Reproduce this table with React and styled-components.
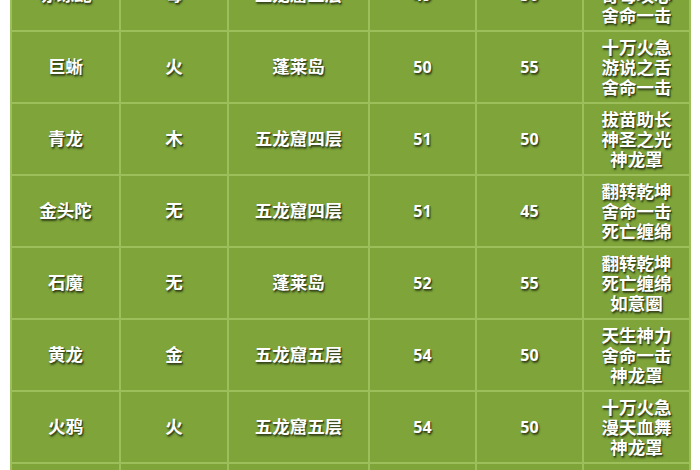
import React from "react";
import styled, { createGlobalStyle } from "styled-components";

const GlobalStyle = createGlobalStyle`
    body {
        margin: 0;
        background: #ffffff;
        font-family: "Noto Sans CJK SC", "Open Sans", sans-serif;
    }
`

// table rows, the first one is cut off at the top of the shot
const rows = [
    { name: "赤练蛇", element: "毒", place: "五龙窟三层", level: "49", hp: "50", skills: ["毒蛇吐信", "奇毒攻心", "舍命一击"] },
    { name: "巨蜥", element: "火", place: "蓬莱岛", level: "50", hp: "55", skills: ["十万火急", "游说之舌", "舍命一击"] },
    { name: "青龙", element: "木", place: "五龙窟四层", level: "51", hp: "50", skills: ["拔苗助长", "神圣之光", "神龙罩"] },
    { name: "金头陀", element: "无", place: "五龙窟四层", level: "51", hp: "45", skills: ["翻转乾坤", "舍命一击", "死亡缠绵"] },
    { name: "石魔", element: "无", place: "蓬莱岛", level: "52", hp: "55", skills: ["翻转乾坤", "死亡缠绵", "如意圈"] },
    { name: "黄龙", element: "金", place: "五龙窟五层", level: "54", hp: "50", skills: ["天生神力", "舍命一击", "神龙罩"] },
    { name: "火鸦", element: "火", place: "五龙窟五层", level: "54", hp: "50", skills: ["十万火急", "漫天血舞", "神龙罩"] },
    { name: "白虎", element: "金", place: "五龙窟六层", level: "55", hp: "55", skills: ["天生神力", "舍命一击", "神龙罩"] },
]

export default function App() {
    return (
        <Viewport>
            <GlobalStyle />
            <Grid>
                {rows.map((row) => (
                    <React.Fragment key={row.name}>
                        <Cell>{row.name}</Cell>
                        <Cell>{row.element}</Cell>
                        <Cell>{row.place}</Cell>
                        <Cell numeric>{row.level}</Cell>
                        <Cell numeric>{row.hp}</Cell>
                        <Cell skills>
                            {row.skills.map((s) => (
                                <SkillLine key={s}>{s}</SkillLine>
                            ))}
                        </Cell>
                    </React.Fragment>
                ))}
            </Grid>
        </Viewport>
    )
}

const Viewport = styled.div`
    width: 700px;
    height: 470px;
    overflow: hidden;
    padding-left: 10px;
    box-sizing: border-box;
    background: #ffffff;
`

const Grid = styled.div`
    display: grid;
    grid-template-columns: 107px 106px 139px 105px 105px 105px;
    grid-auto-rows: 70px;
    gap: 2px;
    padding: 2px;
    width: max-content;
    margin-top: -42px;
    background: #9cbf5c;
`

const Cell = styled.div`
    display: flex;
    flex-direction: column;
    align-items: center;
    justify-content: center;
    padding-bottom: ${(p) => (p.numeric || p.skills ? "0" : "3px")};
    box-sizing: border-box;
    background: #7ea43a;
    color: #ffffff;
    text-align: center;
    font-family: ${(p) => (p.numeric ? `"Open Sans", "Noto Sans CJK SC", sans-serif` : `"Noto Sans CJK SC", sans-serif`)};
    font-size: ${(p) => (p.numeric ? "16px" : "17.5px")};
    font-weight: 700;
    text-shadow: 1px 1px 0 #3b4a1c, 1px 2px 2px rgba(20, 28, 8, 0.7);
`

const SkillLine = styled.div`
    line-height: 20px;
`
